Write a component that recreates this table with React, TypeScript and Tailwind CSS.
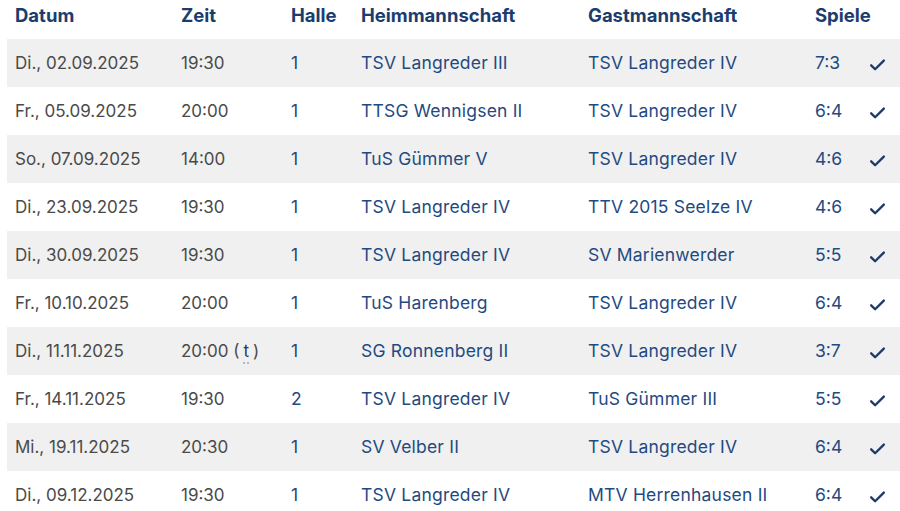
import React from "react";

interface Match {
    datum: string;
    zeit: string;
    halle: string;
    heim: string;
    gast: string;
    spiele: string;
    tausch?: boolean;
}

const matches: Match[] = [
    { datum: "Di., 02.09.2025", zeit: "19:30", halle: "1", heim: "TSV Langreder III", gast: "TSV Langreder IV", spiele: "7:3" },
    { datum: "Fr., 05.09.2025", zeit: "20:00", halle: "1", heim: "TTSG Wennigsen II", gast: "TSV Langreder IV", spiele: "6:4" },
    { datum: "So., 07.09.2025", zeit: "14:00", halle: "1", heim: "TuS Gümmer V", gast: "TSV Langreder IV", spiele: "4:6" },
    { datum: "Di., 23.09.2025", zeit: "19:30", halle: "1", heim: "TSV Langreder IV", gast: "TTV 2015 Seelze IV", spiele: "4:6" },
    { datum: "Di., 30.09.2025", zeit: "19:30", halle: "1", heim: "TSV Langreder IV", gast: "SV Marienwerder", spiele: "5:5" },
    { datum: "Fr., 10.10.2025", zeit: "20:00", halle: "1", heim: "TuS Harenberg", gast: "TSV Langreder IV", spiele: "6:4" },
    { datum: "Di., 11.11.2025", zeit: "20:00", halle: "1", heim: "SG Ronnenberg II", gast: "TSV Langreder IV", spiele: "3:7", tausch: true },
    { datum: "Fr., 14.11.2025", zeit: "19:30", halle: "2", heim: "TSV Langreder IV", gast: "TuS Gümmer III", spiele: "5:5" },
    { datum: "Mi., 19.11.2025", zeit: "20:30", halle: "1", heim: "SV Velber II", gast: "TSV Langreder IV", spiele: "6:4" },
    { datum: "Di., 09.12.2025", zeit: "19:30", halle: "1", heim: "TSV Langreder IV", gast: "MTV Herrenhausen II", spiele: "6:4" },
];

const cols = "grid grid-cols-[166px_110px_70px_227px_227px_53px_1fr]";

const Check = () => (
    <svg width="19" height="19" viewBox="0 0 24 24" fill="none" stroke="#1d3b6a" strokeWidth="3" strokeLinecap="round" strokeLinejoin="round">
        <path d="M4 13l5 5L20 7" />
    </svg>
);

export default function App() {
    return (
        <div className="w-[900px] h-[511px] overflow-hidden bg-white pl-[7px] font-['Inter',sans-serif]">
            <div className={`${cols} h-[39px] items-start pt-[2px] text-[18.5px] font-bold text-[#1b3d6e]`}>
                <div className="pl-2">Datum</div>
                <div className="pl-2">Zeit</div>
                <div className="pl-2">Halle</div>
                <div className="pl-2">Heimmannschaft</div>
                <div className="pl-2">Gastmannschaft</div>
                <div className="pl-2">Spiele</div>
                <div />
            </div>
            {matches.map((m, i) => (
                <div
                    key={i}
                    className={`${cols} h-[48px] items-baseline pt-[12px] leading-6 text-[17.5px] ${i % 2 === 0 ? "bg-[#f0f0f0]" : "bg-white"}`}
                >
                    <div className="pl-2 text-[17px] text-[#4a4a4a]">{m.datum}</div>
                    <div className="pl-2 text-[17px] text-[#4a4a4a]">
                        {m.zeit}
                        {m.tausch && (
                            <span>
                                {" "}(
                                <span className="mx-[4px] text-[#1d3b6a] underline decoration-dotted decoration-[#9aa] underline-offset-[6px]">t</span>
                                )
                            </span>
                        )}
                    </div>
                    <div className="pl-2 text-[#1f4a82]">{m.halle}</div>
                    <div className="pl-2 tracking-[0.2px] text-[#1f4a82]">{m.heim}</div>
                    <div className="pl-2 tracking-[0.2px] text-[#1f4a82]">{m.gast}</div>
                    <div className="pl-2 text-[#1f4a82]">{m.spiele}</div>
                    <div className="pl-[8px] self-center -mt-[10px] flex items-center">
                        <Check />
                    </div>
                </div>
            ))}
        </div>
    );
}
